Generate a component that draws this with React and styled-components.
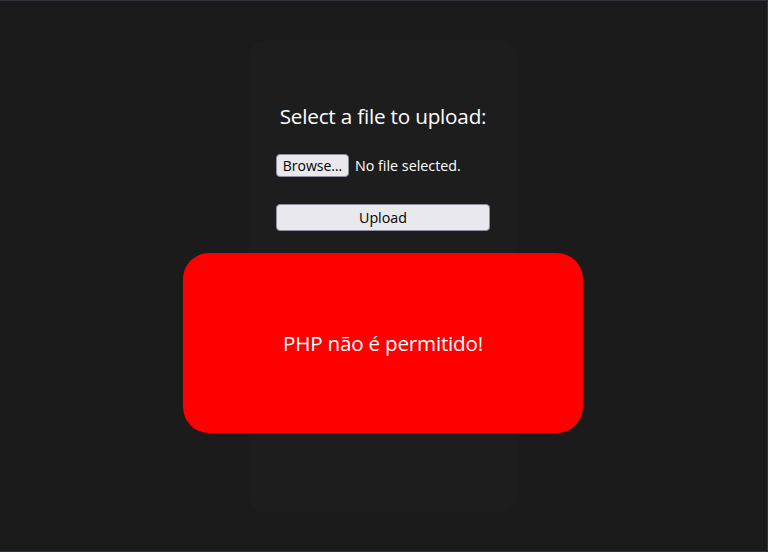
import React from "react";
import styled, { createGlobalStyle } from "styled-components";

const Global = createGlobalStyle`
  html, body { margin: 0; padding: 0; background: #1b1b1b; }
  body { font-family: "Open Sans", "Noto Sans", sans-serif; }
`;

const Frame = styled.div`
  box-sizing: border-box;
  width: 768px;
  height: 552px;
  border-top: 1px solid #34343c;
  border-right: 1px solid #34343c;
  border-bottom: 1px solid #34343c;
  display: flex;
  justify-content: center;
  padding-top: 39px;
  padding-right: 1px;
  overflow: hidden;
`;

const Card = styled.div`
  box-sizing: border-box;
  width: 268px;
  height: 473px;
  background: #1d1d1d;
  border-radius: 16px;
  display: flex;
  flex-direction: column;
  align-items: center;
  padding-top: 64px;
`;

const Title = styled.h3`
  margin: 0;
  color: #ffffff;
  font-size: 20.7px;
  font-weight: 400;
  line-height: 24px;
  letter-spacing: -0.2px;
  white-space: nowrap;
`;

const Form = styled.form`
  width: 214px;
  display: flex;
  flex-direction: column;
  margin-top: 26px;
`;

const FileRow = styled.div`
  display: flex;
  align-items: center;
  gap: 6px;
  height: 23px;
`;

const BrowseButton = styled.button`
  box-sizing: border-box;
  height: 23px;
  width: 73px;
  padding: 0;
  background: #e9e9ed;
  border: 1px solid #8f8f9d;
  border-radius: 4px;
  color: #000;
  font-family: "Open Sans", "Noto Sans", sans-serif;
  font-size: 14px;
`;

const FileStatus = styled.span`
  color: #ffffff;
  font-size: 14.3px;
  white-space: nowrap;
`;

const UploadButton = styled.button`
  box-sizing: border-box;
  margin-top: 27px;
  width: 214px;
  height: 27px;
  background: #e9e9ed;
  border: 1px solid #8f8f9d;
  border-radius: 4px;
  color: #000;
  font-family: "Open Sans", "Noto Sans", sans-serif;
  font-size: 14.3px;
  padding: 0;
`;

const Alert = styled.div`
  flex-shrink: 0;
  margin-top: 22px;
  width: 400px;
  height: 180px;
  background: #ff0000;
  border-radius: 26px;
  display: flex;
  align-items: center;
  justify-content: center;
  color: #ffffff;
  font-size: 20.6px;
  letter-spacing: -0.2px;
`;

export default function App() {
  return (
    <>
      <Global />
      <Frame>
        <Card>
          <Title>Select a file to upload:</Title>
          <Form onSubmit={(e) => e.preventDefault()}>
            <FileRow>
              <BrowseButton type="button">Browse…</BrowseButton>
              <FileStatus>No file selected.</FileStatus>
            </FileRow>
            <UploadButton type="submit">Upload</UploadButton>
          </Form>
          <Alert>PHP não é permitido!</Alert>
        </Card>
      </Frame>
    </>
  );
}
